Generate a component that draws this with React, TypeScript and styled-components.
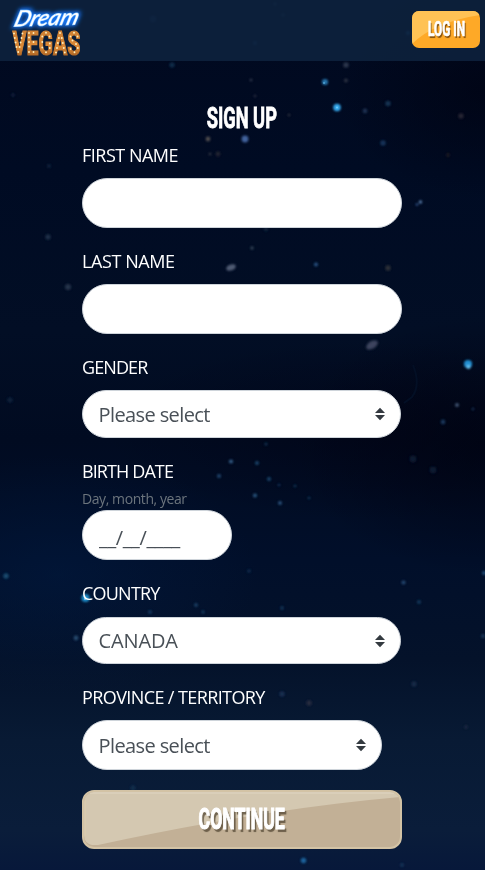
import React from 'react';
import styled, { createGlobalStyle } from 'styled-components';

const GlobalStyle = createGlobalStyle`
  *, *::before, *::after { box-sizing: border-box; }
  html, body { margin: 0; padding: 0; background: #000a1f; }
  body { overflow: hidden; font-family: "Open Sans", "Noto Sans", sans-serif; }
`;

const Page = styled.div`
  position: relative;
  width: 485px;
  height: 870px;
  overflow: hidden;
  color: #fff;
  background:
    radial-gradient(ellipse 190px 130px at 100% 445px, rgba(0, 2, 16, 0.7), rgba(0, 2, 16, 0)),
    radial-gradient(ellipse 260px 90px at 75% 430px, rgba(0, 2, 18, 0.5), rgba(0, 2, 18, 0)),
    radial-gradient(ellipse 200px 120px at 12% 575px, rgba(1, 27, 66, 0.5), rgba(1, 27, 66, 0)),
    radial-gradient(ellipse 150px 110px at 100% 90px, rgba(0, 3, 18, 0.7), rgba(0, 3, 18, 0)),
    linear-gradient(180deg, #01091f 0, #000b23 170px, #020e25 330px, #010b21 440px, #010f2a 560px, #04122a 660px, #081a34 740px, #0a1d3a 830px, #07183a 870px);
`;

const Sky = styled.svg`
  position: absolute;
  inset: 0;
  pointer-events: none;
`;

const Header = styled.header`
  position: relative;
  display: flex;
  align-items: flex-start;
  justify-content: space-between;
  height: 61px;
  padding: 0 5px 0 0;
  background: rgba(14, 34, 62, 0.87);
`;

const Logo = styled.svg`
  display: block;
  width: 96px;
  height: 68px;
  overflow: visible;
`;

const Caption = styled.span<{ $scale: number }>`
  position: relative;
  display: inline-block;
  white-space: nowrap;
  transform: scaleX(${(p) => p.$scale});
`;

const Gloss = styled.svg`
  position: absolute;
  inset: 0;
  width: 100%;
  height: 100%;
`;

const LoginButton = styled.button`
  position: relative;
  display: flex;
  align-items: center;
  justify-content: center;
  width: 68px;
  height: 37px;
  margin-top: 11px;
  padding: 0;
  border: 0;
  border-radius: 7px;
  overflow: hidden;
  color: #fff;
  font: 700 19.5px/37px Roboto, sans-serif;
  -webkit-text-stroke: 0.7px #fff;
  text-shadow: 2px 2px 1px rgba(90, 50, 5, 0.75);
  background: #fea927;
`;

const Form = styled.form`
  position: relative;
  display: flex;
  flex-direction: column;
  width: 320px;
  margin-left: 82px;
  padding-top: 39px;
`;

const Title = styled.h1`
  align-self: center;
  height: 36px;
  margin: 0 0 6px;
  font: 700 29px/36px Roboto, sans-serif;
  -webkit-text-stroke: 0.8px #fff;
  white-space: nowrap;
  transform: scaleX(0.63);
`;

const Group = styled.div`
  display: flex;
  flex-direction: column;
  align-items: flex-start;
  margin-bottom: 20px;
`;

const Label = styled.label<{ $track: number; $below?: number }>`
  height: 27px;
  margin-bottom: ${(p) => p.$below ?? 9}px;
  font-size: 18px;
  line-height: 27px;
  letter-spacing: ${(p) => p.$track}px;
  white-space: nowrap;
`;

const Hint = styled.small`
  height: 23px;
  color: #6c757d;
  font-size: 14px;
  line-height: 23px;
  letter-spacing: -0.42px;
`;

const Field = styled.input<{ $width?: number }>`
  width: ${(p) => p.$width ?? 320}px;
  height: 50px;
  padding: 9px 16px 5px;
  border: 1px solid #ced4da;
  border-radius: 25px;
  outline: 0;
  color: #495057;
  background: #fff;
  font: 400 20px/30px "Open Sans", "Noto Sans", sans-serif;
  letter-spacing: -0.38px;
`;

const SelectBox = styled.div<{ $width: number; $height: number }>`
  display: flex;
  align-items: center;
  justify-content: space-between;
  width: ${(p) => p.$width}px;
  height: ${(p) => p.$height}px;
  padding: 0 14px 0 15px;
  border: 1px solid #ced4da;
  border-radius: 25px;
  color: #495057;
  background: #fff;
`;

const Value = styled.span<{ $track: number }>`
  padding: 1px 0 0 0.5px;
  font-size: 20px;
  line-height: 30px;
  letter-spacing: ${(p) => p.$track}px;
`;

const Submit = styled.button`
  position: relative;
  display: flex;
  align-items: center;
  justify-content: center;
  width: 320px;
  height: 59px;
  padding: 0;
  border: 2px solid #d3c3a5;
  border-radius: 12px;
  overflow: hidden;
  color: #fff;
  font: 700 29px/55px Roboto, sans-serif;
  -webkit-text-stroke: 1.1px #fff;
  text-shadow: 3px 3px 1px rgba(80, 68, 50, 0.75);
  background: #c2b096;
`;

const Arrows = () => (
  <svg width="12" height="14" viewBox="0 0 12 14" aria-hidden="true">
    <path d="M1 6 6 0.8 11 6ZM1 8h10L6 13.2Z" fill="#343a40" />
  </svg>
);

type Star = [x: number, y: number, r: number, color: string, opacity: number];

const stars: Star[] = [
  [325, 82, 4.5, '#2f8fd0', 0.8], [337, 107.5, 5.5, '#36a8ec', 1], [346, 80.5, 3, '#51565f', 0.5],
  [346, 65, 4, '#47516b', 0.6], [365, 111, 3.5, '#294466', 0.7], [388, 103.5, 4, '#1d4268', 0.7],
  [383, 143, 4, '#1e4570', 0.7], [461, 116, 4, '#4a3f4a', 0.5], [448, 155, 3, '#40352f', 0.4],
  [245, 139, 5, '#496dab', 0.9], [208, 139, 3.5, '#615c59', 0.8], [210, 154, 2, '#666', 0.5],
  [218, 154, 3.5, '#39333a', 0.6], [251, 80, 2, '#596070', 0.6], [255, 96, 2, '#454955', 0.6],
  [289, 115, 2, '#555', 0.5], [420.5, 202, 2.4, '#628aba', 0.9], [417, 204.5, 2, '#355d93', 0.9],
  [172, 65, 4, '#163858', 0.7], [13, 95, 3, '#142841', 0.7], [49, 166, 3, '#1c304b', 0.6],
  [48, 237, 4, '#2b3d57', 0.7], [68, 287, 4.5, '#35425a', 0.7], [266, 229, 3.5, '#203550', 0.5],
  [252, 248, 2.4, '#4a5b6c', 0.7], [316, 264.5, 3, '#2d588b', 0.9], [388, 268, 4, '#3c3b40', 0.7],
  [468, 364, 6, '#238fd1', 1], [468.5, 367, 3, '#70cdfa', 0.9], [10, 400, 4, '#132944', 0.7],
  [457, 405, 3, '#455b7b', 0.9], [443, 422, 3.5, '#254c77', 0.7], [473, 409, 2, '#234774', 0.7],
  [413, 459, 5, '#15233a', 0.7], [433, 470, 5, '#14243c', 0.7], [266, 444, 2.3, '#1b4268', 0.7],
  [231, 461.5, 3, '#3a6590', 0.9], [257, 463, 3, '#26537d', 0.8], [219, 476, 3, '#2a5480', 0.8],
  [269, 479, 3, '#26517b', 0.8], [255, 495.5, 3, '#2f5c87', 0.9], [280, 503, 3, '#2d557f', 0.9],
  [295, 486, 2, '#204b70', 0.7], [309, 498, 2, '#204b70', 0.7], [279, 485, 2, '#183c65', 0.8],
  [6, 576, 4, '#22577d', 0.8], [85.5, 598, 6, '#1c8ac6', 1], [76, 638, 3.5, '#2e587e', 0.8],
  [403.5, 582.5, 3, '#2b5682', 0.8], [419, 602, 3, '#224871', 0.7], [484, 573, 3, '#285c8c', 0.8],
  [150, 612, 3, '#21466c', 0.7], [196, 605, 3, '#234f78', 0.7], [203, 612, 2.4, '#21466c', 0.8],
  [282, 608, 3, '#17375d', 0.8], [249, 571, 2.5, '#173960', 0.7], [282, 694, 4, '#1b3558', 0.8],
  [309, 703, 4, '#333347', 0.7], [414, 684, 4, '#1b3558', 0.6], [466, 727, 3, '#2d3446', 0.6],
  [483, 636, 3, '#244669', 0.7], [303.5, 860.5, 4, '#1e6ba7', 0.9], [408, 33, 3, '#23608c', 0.9],
  [255, 43, 3, '#24507c', 0.7], [283, 15, 3, '#33445c', 0.6], [275, 4, 3, '#31425c', 0.6],
  [153, 19, 5, '#1b3b65', 0.6], [133, 788, 4, '#193558', 0.6], [402, 865, 3, '#1b3d63', 0.7],
];

const bulbs = [
  '14,33.5 14.8,38 15.6,42.5 16.5,47 18.2,52 19.6,47 20.6,42.5 21.5,38 22.4,33.5',
  '29,33 29,37.5 29,42 29,46.5 29,52 33.5,33 33.5,42 33.5,52',
  '49.5,36.5 46,32.8 42.3,36.5 42.3,42 42.3,47.5 46,52.2 49.8,48 49.8,43.5',
  '60,33 58.9,38 57.9,43 57,48 56,52.5 61.8,38 62.8,43 63.8,48 64.8,52.5',
  '77.5,36.5 74,32.8 70.5,36.5 72.5,40.5 76,44 77.8,48 74.5,52.2 70.6,49',
].flatMap((letter) => letter.split(' ').map((p) => p.split(',').map(Number)));

const App: React.FC = () => (
  <>
    <GlobalStyle />
    <Page>
      <Sky width="485" height="870" aria-hidden="true">
        <defs>
          <filter id="soft" x="-100%" y="-100%" width="300%" height="300%">
            <feGaussianBlur stdDeviation="1.3" />
          </filter>
        </defs>
        <g filter="url(#soft)">
          {stars.map(([x, y, r, color, opacity]) => (
            <circle key={`${x}-${y}`} cx={x} cy={y} r={r * 0.68} fill={color} opacity={opacity} />
          ))}
          <ellipse cx="231" cy="267.5" rx="5" ry="3" fill="#505b73" transform="rotate(-20 231 267.5)" />
          <ellipse cx="372" cy="345" rx="6.5" ry="3.7" fill="#3d455f" transform="rotate(-32 372 345)" />
        </g>
        <g fill="#72cdfa">
          <circle cx="337" cy="107.5" r="1" />
          <circle cx="324" cy="83" r="0.8" />
          <circle cx="85" cy="599" r="1" />
        </g>
        <path d="M413 365q8 20-1 32l-8 6" fill="none" stroke="#030f25" strokeWidth="2" />
      </Sky>

      <Header>
        <Logo viewBox="0 0 96 68" role="img" aria-label="Dream Vegas">
          <defs>
            <linearGradient id="amber" x1="0" y1="0" x2="0" y2="1">
              <stop offset="0" stopColor="#ca7c31" />
              <stop offset="0.6" stopColor="#dc8936" />
              <stop offset="1" stopColor="#874715" />
            </linearGradient>
            <filter id="neon" x="-20%" y="-60%" width="140%" height="220%">
              <feGaussianBlur stdDeviation="2" />
            </filter>
          </defs>
          <g
            fontFamily="Lato, sans-serif"
            fontSize="22"
            fontStyle="italic"
            fontWeight="400"
            transform="translate(13 26.5) rotate(-2) skewX(-18)"
          >
            <text textLength="64" lengthAdjust="spacingAndGlyphs" fill="#1672ef" stroke="#1672ef" strokeWidth="4" filter="url(#neon)">Dream</text>
            <text textLength="64" lengthAdjust="spacingAndGlyphs" fill="#fff" stroke="#8ac6ff" strokeWidth="1.2" paintOrder="stroke">Dream</text>
          </g>
          <text
            x="12.5" y="55" textLength="68" lengthAdjust="spacingAndGlyphs"
            fontFamily="Roboto, sans-serif" fontWeight="700" fontSize="34"
            fill="url(#amber)" stroke="url(#amber)" strokeWidth="1.2"
          >VEGAS</text>
          <g fill="#fff0bf">
            {bulbs.map(([x, y]) => <circle key={`${x}-${y}`} cx={x} cy={y} r="0.95" />)}
          </g>
        </Logo>
        <LoginButton type="button">
          <Gloss viewBox="0 0 68 37" preserveAspectRatio="none" aria-hidden="true">
            <path d="M0 0H68V4Q22 11 0 33Z" fill="#ffc255" />
          </Gloss>
          <Caption $scale={0.61}>LOG IN</Caption>
        </LoginButton>
      </Header>

      <Form onSubmit={(e) => e.preventDefault()}>
        <Title>SIGN UP</Title>
        <Group>
          <Label htmlFor="first" $track={-0.5}>FIRST NAME</Label>
          <Field id="first" />
        </Group>
        <Group>
          <Label htmlFor="last" $track={-0.42}>LAST NAME</Label>
          <Field id="last" />
        </Group>
        <Group>
          <Label $track={-0.9}>GENDER</Label>
          <SelectBox $width={319} $height={48}><Value $track={-0.6}>Please select</Value><Arrows /></SelectBox>
        </Group>
        <Group>
          <Label htmlFor="birth" $track={-0.9} $below={2}>BIRTH DATE</Label>
          <Hint>Day, month, year</Hint>
          <Field id="birth" $width={150} defaultValue="__/__/____" />
        </Group>
        <Group>
          <Label $track={-0.78} $below={10}>COUNTRY</Label>
          <SelectBox $width={319} $height={47}><Value $track={-0.12}>CANADA</Value><Arrows /></SelectBox>
        </Group>
        <Group>
          <Label $track={-0.6}>PROVINCE / TERRITORY</Label>
          <SelectBox $width={300} $height={50}><Value $track={-0.6}>Please select</Value><Arrows /></SelectBox>
        </Group>
        <Submit type="submit">
          <Gloss viewBox="0 0 316 55" preserveAspectRatio="none" aria-hidden="true">
            <path d="M0 0H316V5Q180 17 14 53H8Q0 51 0 43Z" fill="#d4c8b1" />
            <path d="M6 1H310" stroke="#dfd5c2" strokeWidth="1" />
            <path d="M1.5 8V44" stroke="#d9cbae" strokeWidth="1" />
          </Gloss>
          <Caption $scale={0.61}>CONTINUE</Caption>
        </Submit>
      </Form>
    </Page>
  </>
);

export default App;
